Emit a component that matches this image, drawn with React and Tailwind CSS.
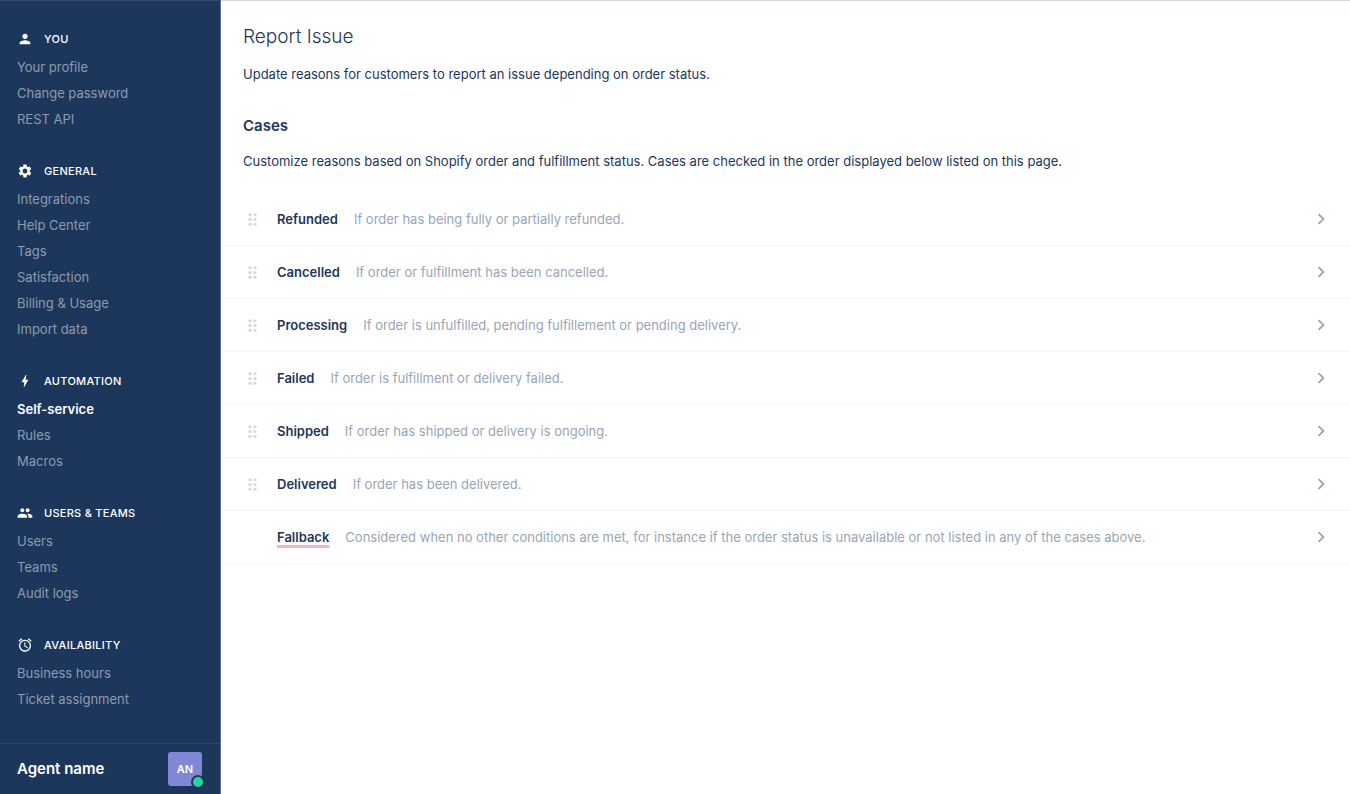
import { MdAlarm, MdBolt, MdChevronRight, MdPeople, MdPerson, MdSettings } from 'react-icons/md';

const sections = [
  { title: 'You', icon: MdPerson, items: ['Your profile', 'Change password', 'REST API'] },
  {
    title: 'General',
    icon: MdSettings,
    items: ['Integrations', 'Help Center', 'Tags', 'Satisfaction', 'Billing & Usage', 'Import data'],
  },
  { title: 'Automation', icon: MdBolt, items: ['Self-service', 'Rules', 'Macros'] },
  { title: 'Users & Teams', icon: MdPeople, items: ['Users', 'Teams', 'Audit logs'] },
  { title: 'Availability', icon: MdAlarm, items: ['Business hours', 'Ticket assignment'] },
];

const cases = [
  { name: 'Refunded', description: 'If order has being fully or partially refunded.' },
  { name: 'Cancelled', description: 'If order or fulfillment has been cancelled.' },
  { name: 'Processing', description: 'If order is unfulfilled, pending fulfillement or pending delivery.' },
  { name: 'Failed', description: 'If order is fulfillment or delivery failed.' },
  { name: 'Shipped', description: 'If order has shipped or delivery is ongoing.' },
  { name: 'Delivered', description: 'If order has been delivered.' },
  {
    name: 'Fallback',
    description:
      'Considered when no other conditions are met, for instance if the order status is unavailable or not listed in any of the cases above.',
    fixed: true,
  },
];

const DragDots = () => (
  <svg width="9" height="13" viewBox="0 0 9 13" fill="currentColor" aria-hidden="true">
    {[1.75, 6.5, 11.25].map((y) => (
      <g key={y}>
        <circle cx="2" cy={y} r="1.6" />
        <circle cx="7" cy={y} r="1.6" />
      </g>
    ))}
  </svg>
);

const Sidebar = ({ active }) => (
  <aside className="flex w-[221px] shrink-0 flex-col border-t border-r border-t-[#34486b] border-r-[#5f718c] bg-[#1d365c]">
    <nav className="flex flex-1 flex-col gap-[23px] px-[17px] pt-[22px]">
      {sections.map(({ title, icon: Icon, items }) => (
        <section key={title}>
          <h2 className="flex h-[31px] items-center gap-[11px] text-[11px] font-medium tracking-wide text-white uppercase">
            <Icon className="size-4" />
            {title}
          </h2>
          <ul>
            {items.map((item) => (
              <li key={item} className="flex h-[26px] items-center">
                <a
                  href="#"
                  className={
                    item === active
                      ? 'font-semibold text-white'
                      : 'text-[#8e9bae] hover:text-white'
                  }
                >
                  {item}
                </a>
              </li>
            ))}
          </ul>
        </section>
      ))}
    </nav>

    {/* Current agent */}
    <div className="flex h-[51px] items-center justify-between border-t border-[#2f466a] pr-[18px] pl-[17px]">
      <span className="text-[15px] leading-6 font-semibold text-white">Agent name</span>
      <button
        type="button"
        className="relative size-[34px] rounded-[3px] bg-[#8088d6] text-[11px] font-semibold text-white"
      >
        AN
        <span className="absolute -right-[3px] -bottom-[3px] size-[14px] rounded-full border-2 border-[#1d365c] bg-[#24d69d]" />
      </button>
    </div>
  </aside>
);

const CaseRow = ({ name, description, fixed }) => (
  <li className="flex h-[53px] items-center border-b border-[#f3f4f6] pr-[18px] pl-[27px]">
    <div className="w-[29px] shrink-0">
      {!fixed && (
        <button type="button" aria-label={`Reorder ${name}`} className="flex cursor-grab text-[#d2d7de]">
          <DragDots />
        </button>
      )}
    </div>
    <a href="#" className="flex flex-1 items-center gap-4">
      <span
        className={
          fixed
            ? 'font-semibold underline decoration-[#ffb3b5] decoration-3 underline-offset-3 [text-decoration-skip-ink:none]'
            : 'font-semibold'
        }
      >
        {name}
      </span>
      <span className="flex-1 text-[#99a5b6]">{description}</span>
      <MdChevronRight className="size-[22px] text-[#99a5b6]" />
    </a>
  </li>
);

const App = () => {
  return (
    <div className="flex min-h-screen bg-white font-['Inter',sans-serif] text-[13px] leading-5 text-[#1d365c]">
      <Sidebar active="Self-service" />
      <main className="min-w-0 flex-1 border-t border-[#d2d7e0]">
        <header className="px-[22px] pt-[22px]">
          <h1 className="text-[19px] leading-7 font-light">Report Issue</h1>
          <p className="mt-[13px]">
            Update reasons for customers to report an issue depending on order status.
          </p>
          <h2 className="mt-8 text-[15px] font-semibold">Cases</h2>
          <p className="mt-[15px]">
            Customize reasons based on Shopify order and fulfillment status. Cases are checked in the order
            displayed below listed on this page.
          </p>
        </header>
        <ul className="mt-[22px]">
          {cases.map((item) => (
            <CaseRow key={item.name} {...item} />
          ))}
        </ul>
      </main>
    </div>
  );
};

export default App;
